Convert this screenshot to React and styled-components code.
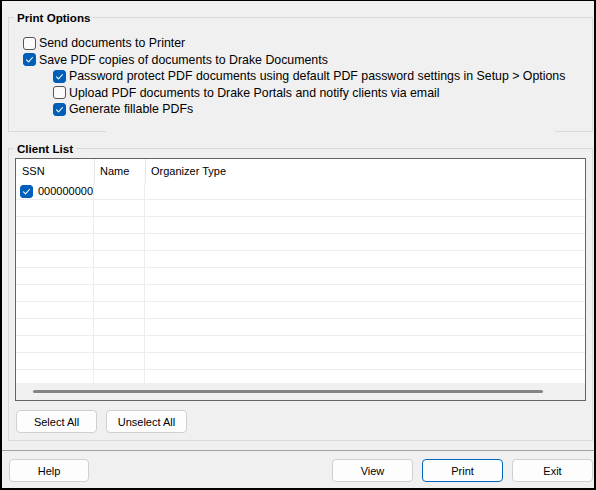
import React from 'react';
import styled, { createGlobalStyle } from 'styled-components';

const GlobalStyle = createGlobalStyle`
  html, body {
    margin: 0;
    padding: 0;
    background: #f0f0f0;
  }
  body {
    font-family: "Liberation Sans", Arial, sans-serif;
    color: #000;
  }
`;

const Window = styled.div`
  box-sizing: border-box;
  width: 596px;
  height: 490px;
  background: #f0f0f0;
  border: 2px solid #000;
  border-top-width: 1px;
  display: flex;
  flex-direction: column;
`;

const Body = styled.div`
  display: flex;
  flex-direction: column;
  gap: 9px;
  padding: 9px 1px 0 6px;
`;

const Group = styled.fieldset`
  margin: 0;
  padding: 0;
  min-width: 0;
  border: 1px solid #dadada;
  ${p => p.$openBottom && 'border-bottom: none;'}
`;

const Legend = styled.legend`
  margin-left: 5px;
  padding: 0 3px;
  font-size: 11.6px;
  font-weight: bold;
  line-height: 15px;
`;

const Options = styled.div`
  display: flex;
  flex-direction: column;
  padding: 10px 0 13.5px 14px;
`;

const OptionRow = styled.label`
  display: flex;
  align-items: center;
  gap: 3px;
  height: 16.5px;
  padding-left: ${p => (p.$sub ? '30px' : '0')};
  font-size: 12.35px;
  white-space: nowrap;
`;

const BottomEdge = styled.div`
  display: flex;
  justify-content: space-between;
  height: 1px;
`;

const EdgeSegment = styled.div`
  width: ${p => p.$w}px;
  background: #dadada;
`;

const Box = styled.span`
  box-sizing: border-box;
  flex: none;
  width: 13px;
  height: 13px;
  border-radius: 3px;
  border: 1px solid ${p => (p.$checked ? '#005fb8' : '#555')};
  background: ${p => (p.$checked ? '#005fb8' : '#fbfbfb')};
  display: flex;
  align-items: center;
  justify-content: center;
`;

const Check = ({ checked }) => (
  <Box $checked={checked}>
    {checked && (
      <svg width="11" height="11" viewBox="0 0 11 11">
        <path d="M2.5 5.9 L4.5 7.8 L8.5 3.5" fill="none" stroke="#fff" strokeWidth="1.1" strokeLinecap="round" strokeLinejoin="round" />
      </svg>
    )}
  </Box>
);

const ListBox = styled.div`
  box-sizing: border-box;
  margin: 2px 6px 0;
  height: 243px;
  border: 1px solid #646464;
  background: #fff;
  display: flex;
  flex-direction: column;
  font-size: 11px;
`;

const columns = '78px 51px 1fr';

const HeaderRow = styled.div`
  display: grid;
  grid-template-columns: ${columns};
  height: 24px;
  flex: none;
`;

const HeaderCell = styled.div`
  display: flex;
  align-items: center;
  padding-left: 6px;
  border-right: ${p => (p.$last ? 'none' : '1px solid #e5e5e5')};
  margin-right: ${p => (p.$last ? '0' : '-1px')};
`;

const Rows = styled.div`
  flex: 1;
  overflow: hidden;
`;

const Row = styled.div`
  box-sizing: border-box;
  display: grid;
  grid-template-columns: ${columns};
  height: 17px;
  border-bottom: 1px solid #ededed;
`;

const Cell = styled.div`
  display: flex;
  align-items: center;
  gap: 5px;
  padding-left: ${p => (p.$pad ? p.$pad : 0)}px;
  border-right: ${p => (p.$last ? 'none' : '1px solid #ededed')};
  white-space: nowrap;
  overflow: hidden;
`;

const ScrollTrack = styled.div`
  flex: none;
  height: 17px;
  background: #f0f0f0;
  display: flex;
  align-items: center;
  padding-left: 17px;
`;

const Thumb = styled.div`
  width: 510px;
  height: 3px;
  border-radius: 2px;
  background: #858585;
`;

const ButtonRow = styled.div`
  display: flex;
  gap: 9px;
  margin: 9px 0 7px 7px;
`;

const Button = styled.button`
  box-sizing: border-box;
  width: ${p => p.$w || 81}px;
  height: 23px;
  padding: 0;
  border: 1px solid ${p => (p.$primary ? '#0067c0' : '#d0d0d0')};
  border-radius: 4px;
  background: #fdfdfd;
  font-family: "Liberation Sans", Arial, sans-serif;
  font-size: 11px;
  color: #000;
`;

const Separator = styled.div`
  height: 1px;
  margin-top: 9px;
  background: #a0a0a0;
`;

const Footer = styled.div`
  display: flex;
  align-items: center;
  gap: 9px;
  padding: 8px 1px 0 7px;
`;

const Spacer = styled.div`
  flex: 1;
`;

const options = [
  { label: 'Send documents to Printer', checked: false },
  { label: 'Save PDF copies of documents to Drake Documents', checked: true },
  { label: 'Password protect PDF documents using default PDF password settings in Setup > Options', checked: true, sub: true },
  { label: 'Upload PDF documents to Drake Portals and notify clients via email', checked: false, sub: true },
  { label: 'Generate fillable PDFs', checked: true, sub: true },
];

const clients = [{ ssn: '000000000', name: '', type: '', checked: true }];
const emptyRows = 11;

export default function App() {
  return (
    <>
      <GlobalStyle />
      <Window>
        <Body>
          <Group $openBottom>
            <Legend>Print Options</Legend>
            <Options>
              {options.map(o => (
                <OptionRow key={o.label} $sub={o.sub}>
                  <Check checked={o.checked} />
                  {o.label}
                </OptionRow>
              ))}
            </Options>
            <BottomEdge>
              <EdgeSegment $w={97} />
              <EdgeSegment $w={37} />
            </BottomEdge>
          </Group>

          <Group>
            <Legend>Client List</Legend>
            <ListBox>
              <HeaderRow>
                <HeaderCell>SSN</HeaderCell>
                <HeaderCell>Name</HeaderCell>
                <HeaderCell $last>Organizer Type</HeaderCell>
              </HeaderRow>
              <Rows>
                {clients.map(c => (
                  <Row key={c.ssn}>
                    <Cell $pad={4}>
                      <Check checked={c.checked} />
                      {c.ssn}
                    </Cell>
                    <Cell $pad={6}>{c.name}</Cell>
                    <Cell $pad={6} $last>{c.type}</Cell>
                  </Row>
                ))}
                {Array.from({ length: emptyRows }).map((_, i) => (
                  <Row key={i}>
                    <Cell />
                    <Cell />
                    <Cell $last />
                  </Row>
                ))}
              </Rows>
              <ScrollTrack>
                <Thumb />
              </ScrollTrack>
            </ListBox>
            <ButtonRow>
              <Button>Select All</Button>
              <Button>Unselect All</Button>
            </ButtonRow>
          </Group>
        </Body>
        <Separator />
        <Footer>
          <Button $w={80}>Help</Button>
          <Spacer />
          <Button>View</Button>
          <Button $primary>Print</Button>
          <Button>Exit</Button>
        </Footer>
      </Window>
    </>
  );
}
